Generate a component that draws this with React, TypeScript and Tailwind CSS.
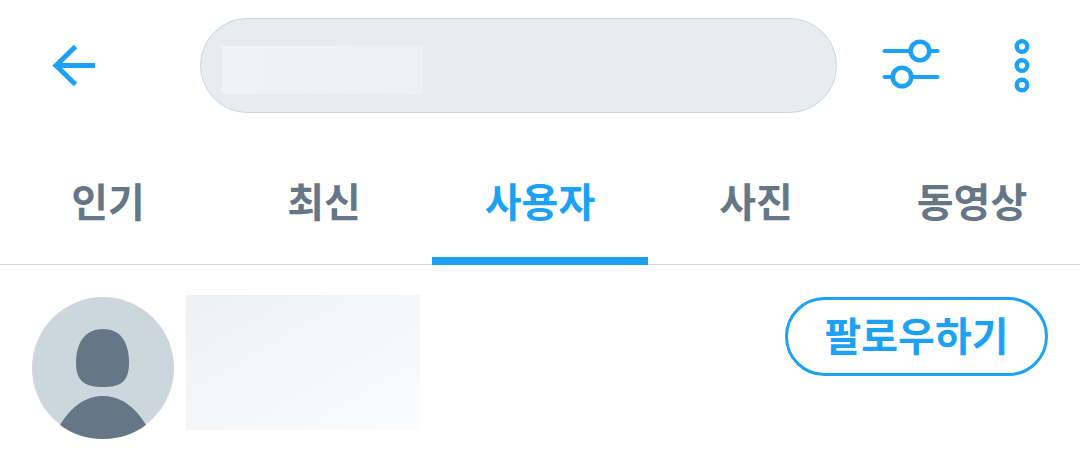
import React from "react";

const tabs = ["인기", "최신", "사용자", "사진", "동영상"];

const BackIcon = () => (
  <svg width="44" height="44" viewBox="0 0 44 44" fill="none" stroke="#1da1f2" strokeWidth="5">
    <path d="M23.500 2.500 L4 21.500 L23.500 40.500" />
    <path d="M4 21.500 H43" />
  </svg>
);

const FilterIcon = () => (
  <svg width="58" height="52" viewBox="0 0 58 52" fill="none" stroke="#1da1f2">
    <path d="M2.500 13 H27 M47 13 H55.500" strokeWidth="4" strokeLinecap="round" />
    <circle cx="38" cy="13" r="9.300" strokeWidth="4.600" />
    <path d="M2.500 39 H9 M29 39 H55.500" strokeWidth="4" strokeLinecap="round" />
    <circle cx="20" cy="39" r="9.300" strokeWidth="4.600" />
  </svg>
);

const MoreIcon = () => (
  <svg width="16" height="54" viewBox="0 0 16 54" fill="none" stroke="#1da1f2" strokeWidth="4.400">
    <circle cx="8" cy="7.500" r="5.300" />
    <circle cx="8" cy="26.500" r="5.300" />
    <circle cx="8" cy="46" r="5.300" />
  </svg>
);

const Avatar = () => (
  <svg width="142" height="142" viewBox="0 0 142 142" className="shrink-0">
    <circle cx="71" cy="71" r="71" fill="#ccd6dd" />
    <path d="M71 32 C90 32 97 47 97 66 C97 85 88 90 71 90 C54 90 44 85 44 66 C44 47 52 32 71 32 Z" fill="#657786" />
    <path d="M28 128 C40 108 55 99 71 99 C87 99 102 108 114 128 C102 137 87 142 71 142 C55 142 40 137 28 128 Z" fill="#657786" />
  </svg>
);

export default function App() {
  return (
    <div className="w-[1080px] h-[471px] overflow-hidden bg-white font-['Liberation_Sans','Noto_Sans_CJK_KR',sans-serif]">
      {/* top bar */}
      <div className="flex items-start h-[150px]">
        <div className="w-[200px] pl-[52px] pt-[44px]">
          <BackIcon />
        </div>
        <div className="mt-[18px] w-[637px] h-[95px] rounded-full bg-[#e6ecf0] border border-[#ccd6dd] pl-[21px] pt-[27px]">
          <div className="w-[201px] h-[48px] bg-gradient-to-r from-[#f0f2f4] to-[#edf1f3]" />
        </div>
        <div className="ml-[45px] mt-[38px]">
          <FilterIcon />
        </div>
        <div className="ml-[74px] mt-[39px]">
          <MoreIcon />
        </div>
      </div>

      {/* tabs */}
      <div className="flex h-[115px] border-b border-[#d3d6d8]">
        {tabs.map((tab, i) => (
          <div
            key={tab}
            className={
              i === 2
                ? "w-[216px] h-[115px] flex items-center justify-center pb-[1px] text-[40px] font-bold text-[#1da1f2] border-b-[8px] border-[#1da1f2]"
                : "w-[216px] h-[115px] flex items-center justify-center pb-[9px] text-[40px] font-bold text-[#657786]"
            }
          >
            {tab}
          </div>
        ))}
      </div>

      {/* user row */}
      <div className="flex items-start pt-[30px]">
        <div className="ml-[32px] mt-[2px]">
          <Avatar />
        </div>
        <div className="ml-[12px] w-[234px] h-[135px] bg-gradient-to-br from-[#eef0f2] to-[#fbfcfd]" />
        <div className="ml-[365px] mt-[2px] w-[263px] h-[79px] pt-[1px] rounded-full border-[3px] border-[#1da1f2] flex items-center justify-center text-[40px] font-bold text-[#1da1f2]">
          팔로우하기
        </div>
      </div>
    </div>
  );
}
